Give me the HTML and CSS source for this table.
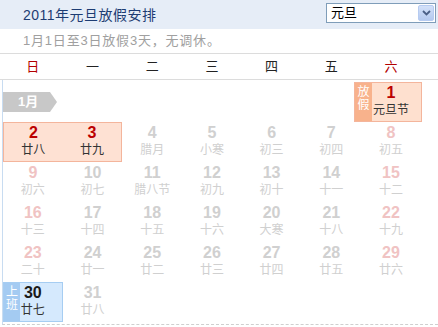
FILE: index.html
```html
<!DOCTYPE html>
<html lang="zh">
<head>
<meta charset="utf-8">
<link rel="stylesheet" href="styles.css">
</head>
<body>
<div class="page">
  <div class="header">
    <div class="title">2011年元旦放假安排</div>
    <div class="select">
      <span class="select-text">元旦</span>
      <span class="select-btn"><svg width="9" height="6" viewBox="0 0 9 6"><path d="M1 1 L4.5 4.5 L8 1" fill="none" stroke="#4a5f86" stroke-width="1.8"/></svg></span>
    </div>
  </div>
  <div class="note">1月1日至3日放假3天，无调休。</div>
  <div class="weekdays">
    <div class="wd red">日</div>
    <div class="wd">一</div>
    <div class="wd">二</div>
    <div class="wd">三</div>
    <div class="wd">四</div>
    <div class="wd">五</div>
    <div class="wd red">六</div>
  </div>
  <div class="cal">
    <div class="grid">
      <div class="month-cell"><div class="month">1月</div></div>
      <div></div><div></div><div></div><div></div><div></div>
      <div class="day holiday first">
        <span class="tag tag-off">放<br>假</span>
        <span class="num active">1</span><span class="lunar dark">元旦节</span>
      </div>

      <div class="hol-span">
        <div class="day"><span class="num active">2</span><span class="lunar dark">廿八</span></div>
        <div class="day"><span class="num active">3</span><span class="lunar dark">廿九</span></div>
      </div>
      <div class="day"><span class="num">4</span><span class="lunar">腊月</span></div>
      <div class="day"><span class="num">5</span><span class="lunar">小寒</span></div>
      <div class="day"><span class="num">6</span><span class="lunar">初三</span></div>
      <div class="day"><span class="num">7</span><span class="lunar">初四</span></div>
      <div class="day"><span class="num we">8</span><span class="lunar">初五</span></div>

      <div class="day"><span class="num we">9</span><span class="lunar">初六</span></div>
      <div class="day"><span class="num">10</span><span class="lunar">初七</span></div>
      <div class="day"><span class="num">11</span><span class="lunar">腊八节</span></div>
      <div class="day"><span class="num">12</span><span class="lunar">初九</span></div>
      <div class="day"><span class="num">13</span><span class="lunar">初十</span></div>
      <div class="day"><span class="num">14</span><span class="lunar">十一</span></div>
      <div class="day"><span class="num we">15</span><span class="lunar">十二</span></div>

      <div class="day"><span class="num we">16</span><span class="lunar">十三</span></div>
      <div class="day"><span class="num">17</span><span class="lunar">十四</span></div>
      <div class="day"><span class="num">18</span><span class="lunar">十五</span></div>
      <div class="day"><span class="num">19</span><span class="lunar">十六</span></div>
      <div class="day"><span class="num">20</span><span class="lunar">大寒</span></div>
      <div class="day"><span class="num">21</span><span class="lunar">十八</span></div>
      <div class="day"><span class="num we">22</span><span class="lunar">十九</span></div>

      <div class="day"><span class="num we">23</span><span class="lunar">二十</span></div>
      <div class="day"><span class="num">24</span><span class="lunar">廿一</span></div>
      <div class="day"><span class="num">25</span><span class="lunar">廿二</span></div>
      <div class="day"><span class="num">26</span><span class="lunar">廿三</span></div>
      <div class="day"><span class="num">27</span><span class="lunar">廿四</span></div>
      <div class="day"><span class="num">28</span><span class="lunar">廿五</span></div>
      <div class="day"><span class="num we">29</span><span class="lunar">廿六</span></div>

      <div class="day work">
        <span class="tag tag-work">上<br>班</span>
        <span class="num black">30</span><span class="lunar dark">廿七</span>
      </div>
      <div class="day"><span class="num">31</span><span class="lunar">廿八</span></div>
    </div>
  </div>
</div>
</body>
</html>
```

FILE: styles.css
```css
* { box-sizing: border-box; }
html, body { margin: 0; padding: 0; background: #fff; }
body {
  width: 438px;
  height: 327px;
  overflow: hidden;
  font-family: "Liberation Sans", "Noto Sans CJK SC", sans-serif;
  color: #333;
}
.header {
  height: 29px;
  background: #e6edf7;
  display: flex;
  align-items: center;
  justify-content: space-between;
  padding: 0 2px 0 23px;
}
.title {
  font-size: 14px;
  line-height: 16px;
  letter-spacing: 0.5px;
  color: #1d3c73;
}
.select {
  width: 110px;
  height: 20px;
  border: 1px solid #7f9db9;
  background: #fff;
  display: flex;
  align-items: center;
  justify-content: space-between;
  padding: 0 1px 0 4px;
  margin-top: -3px;
}
.select-text {
  font-size: 13px;
  line-height: 16px;
  color: #000;
}
.select-btn {
  width: 16px;
  height: 16px;
  background: linear-gradient(#d3e1f9, #b4c9ef);
  border: 1px solid #b6cbf1;
  border-radius: 2px;
  display: flex;
  align-items: center;
  justify-content: center;
}
.note {
  height: 25px;
  border-bottom: 1px solid #dcdcdc;
  padding-left: 23px;
  font-size: 13px;
  line-height: 24px;
  letter-spacing: 0.8px;
  color: #a0a0a0;
}
.weekdays {
  height: 26px;
  border-bottom: 1px solid #dcdcdc;
  padding-left: 3px;
  display: grid;
  grid-template-columns: repeat(7, 59.7px);
  align-items: center;
}
.wd {
  text-align: center;
  font-size: 13px;
  line-height: 16px;
  color: #222;
}
.wd.red { color: #b30000; }
.cal {
  margin-left: 2px;
  border-left: 1px solid #c8dcf1;
  border-bottom: 1px dashed #cfcfcf;
  padding: 2px 0 2px 0;
}
.grid {
  display: grid;
  grid-template-columns: repeat(7, 59.7px);
  grid-auto-rows: 40px;
}
.month-cell {
  display: flex;
  align-items: center;
}
.month {
  width: 54px;
  height: 20px;
  background: #c8c8c8;
  clip-path: polygon(0 0, 47px 0, 54px 10px, 47px 20px, 0 20px);
  color: #fff;
  font-weight: bold;
  font-size: 13px;
  line-height: 20px;
  padding-left: 15px;
}
.day {
  position: relative;
  display: flex;
  flex-direction: column;
  align-items: center;
  padding-top: 2px;
}
.num {
  font-weight: bold;
  font-size: 16px;
  line-height: 18px;
  color: #d0d0d0;
}
.num.we { color: #f0c3c3; }
.num.active { color: #bb0000; }
.num.black { color: #1a1a1a; }
.lunar {
  font-size: 12px;
  line-height: 16px;
  color: #d0d0d0;
}
.lunar.dark { color: #333; }
.hol-span {
  grid-column: span 2;
  display: grid;
  grid-template-columns: 1fr 1fr;
  background: #fee1d3;
  border: 1px solid #f4b59c;
}
.hol-span .day { padding-top: 1px; }
.holiday {
  background: #fee0cf;
  border: 1px solid #f4b59c;
  margin-left: -7px;
  margin-right: -1px;
  padding-left: 7px;
  padding-right: 1px;
  padding-top: 1px;
}
.tag {
  position: absolute;
  left: 0;
  top: 0;
  bottom: 0;
  width: 17px;
  color: #fff;
  font-size: 12px;
  line-height: 13px;
  text-align: center;
  display: flex;
  align-items: center;
  justify-content: center;
  padding-bottom: 6px;
}
.tag-off { background: #f8b28c; }
.work {
  background: #d5e9fd;
  border: 1px solid #a6cdf2;
  padding-top: 1px;
}
.tag-work { background: #a4cbf2; width: 16px; }
```
